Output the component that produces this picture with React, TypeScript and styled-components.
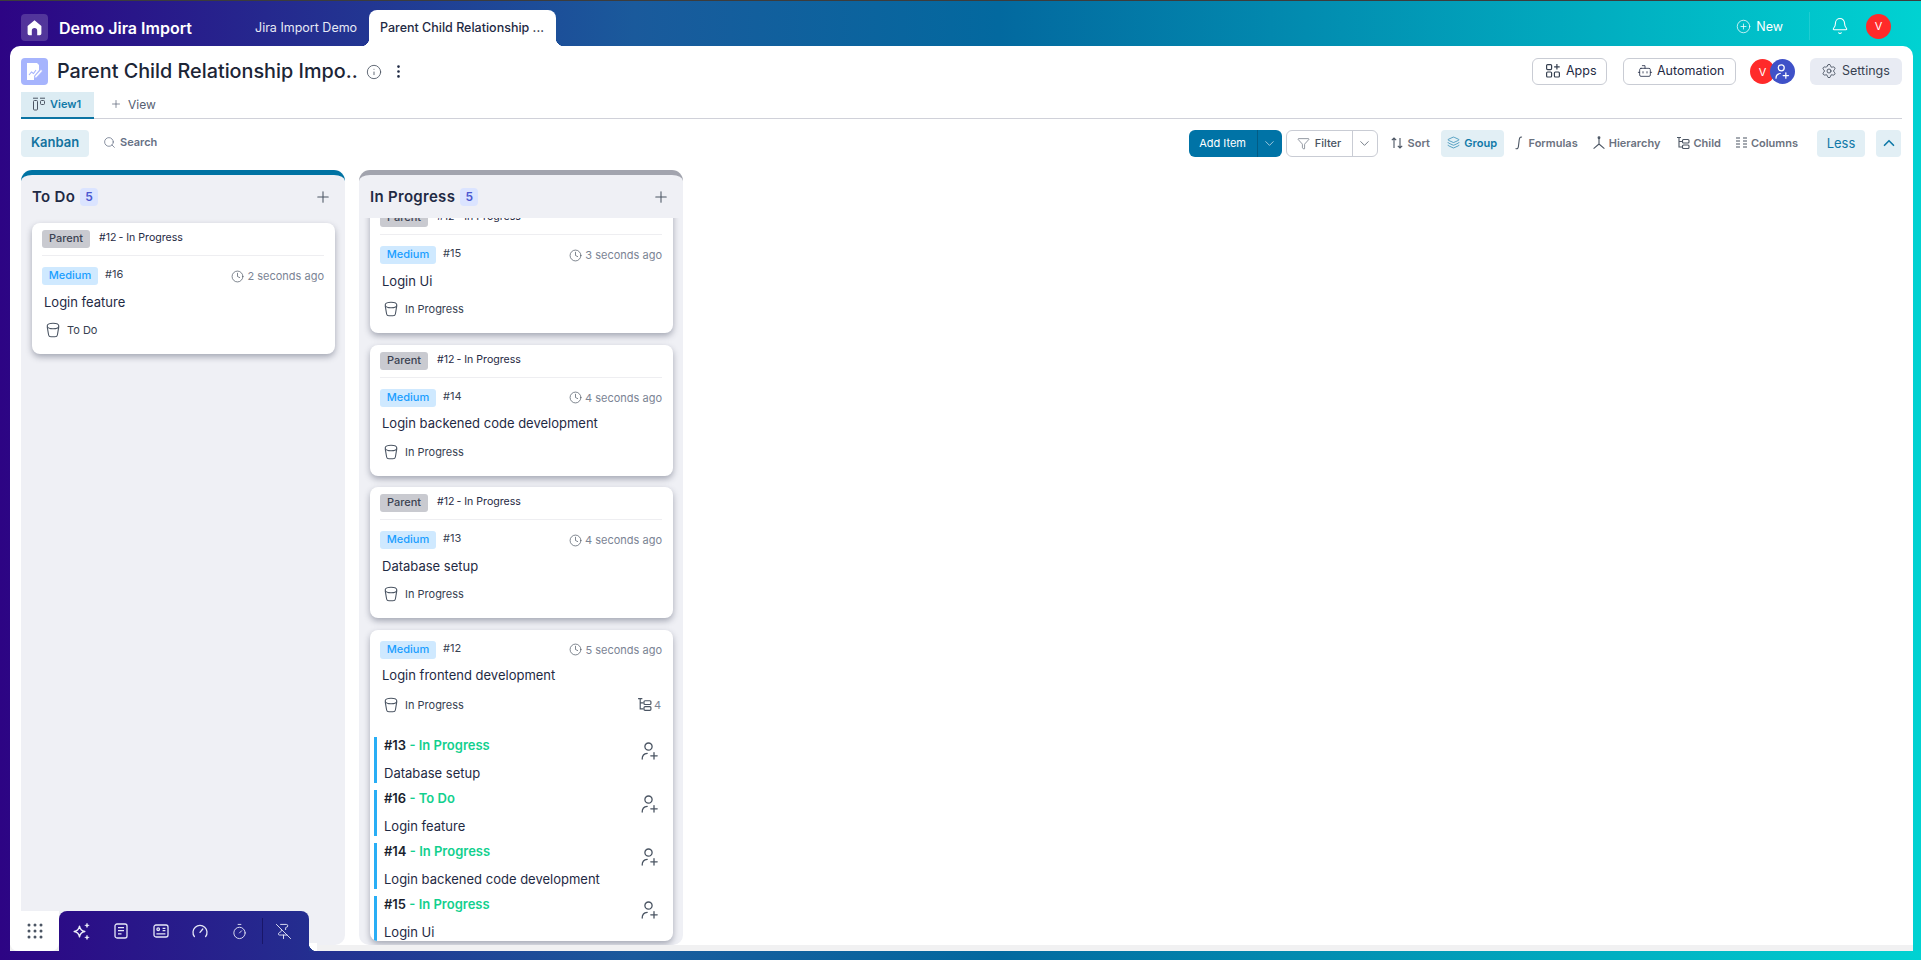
import { FC, ReactNode } from 'react'
import styled, { createGlobalStyle } from 'styled-components'
import {
  Bell,
  Bot,
  ChevronDown,
  ChevronUp,
  CirclePlus,
  Clock,
  EllipsisVertical,
  Funnel,
  Info,
  Layers,
  PinOff,
  Plus,
  Search,
  Settings,
  Timer,
} from 'lucide-react'

const GRADIENT = 'linear-gradient(90deg, #2d0484 0%, #1a5a9c 33%, #03699f 52%, #00d2d2 100%)'

const GlobalStyle = createGlobalStyle`
  html, body {
    margin: 0;
    padding: 0;
    height: 100%;
    overflow: hidden;
  }
  body {
    font-family: Inter, "Noto Sans", "Liberation Sans", sans-serif;
    color: #1f2a44;
  }
  * {
    box-sizing: border-box;
  }
`

const Shell = styled.div`
  position: relative;
  display: flex;
  flex-direction: column;
  width: 1921px;
  height: 960px;
  overflow: hidden;
  background: ${GRADIENT};
  background-attachment: fixed;
  border-top: 1px solid #3c3c3c;
`

/* ---------- top bar ---------- */

const TopBar = styled.header`
  display: flex;
  align-items: flex-end;
  height: 45px;
  flex: none;
  padding: 0 30px 0 21px;
`

const HomeTile = styled.div`
  display: flex;
  align-items: center;
  justify-content: center;
  width: 27px;
  height: 27px;
  margin-bottom: 5px;
  border-radius: 4px;
  background: rgba(255, 255, 255, 0.18);
`

const AppName = styled.div`
  margin: 0 0 9px 11px;
  width: 196px;
  color: #fff;
  font-size: 16px;
  font-weight: 600;
  line-height: 18px;
`

const TabText = styled.div`
  width: 114px;
  margin-bottom: 9px;
  color: #e6e9f5;
  font-size: 12.5px;
  line-height: 18px;
`

const ActiveTab = styled.div`
  position: relative;
  width: 187px;
  height: 36px;
  padding-left: 11px;
  border-radius: 8px 8px 0 0;
  background: #fff;
  color: #1f2a44;
  font-size: 12.5px;
  font-weight: 500;
  line-height: 35px;
  white-space: nowrap;

  &::before,
  &::after {
    content: '';
    position: absolute;
    bottom: 0;
    width: 8px;
    height: 8px;
  }
  &::before {
    left: -8px;
    background: radial-gradient(circle at 0 0, transparent 8px, #fff 8.5px);
  }
  &::after {
    right: -8px;
    background: radial-gradient(circle at 100% 0, transparent 8px, #fff 8.5px);
  }
`

const TopRight = styled.div`
  display: flex;
  align-items: center;
  height: 40px;
  margin-left: auto;
  color: #fff;
`

const NewLink = styled.div`
  display: flex;
  align-items: center;
  gap: 5px;
  padding-right: 26px;
  font-size: 12.5px;
  font-weight: 400;
`

const BarSeparator = styled.div`
  width: 1px;
  height: 28px;
  margin-right: 21px;
  background: rgba(255, 255, 255, 0.12);
`

const BellSlot = styled.div`
  display: flex;
  margin-right: 17px;
`

const Avatar = styled.div`
  display: flex;
  align-items: center;
  justify-content: center;
  width: 25px;
  height: 25px;
  border-radius: 50%;
  background: #ff2a2a;
  color: #fff;
  font-size: 11px;
`

/* ---------- main sheet ---------- */

const Sheet = styled.main`
  display: flex;
  flex-direction: column;
  flex: 1;
  min-height: 0;
  margin: 0 8px 9px 10px;
  padding: 12px 11px 0;
  border-radius: 10px 10px 0 0;
  background: #fff;
`

const TitleRow = styled.div`
  display: flex;
  align-items: center;
  height: 27px;
  flex: none;
`

const SheetIcon = styled.div`
  display: flex;
  align-items: center;
  justify-content: center;
  width: 27px;
  height: 27px;
  border-radius: 4px;
  background: #a6b4fd;
`

const SheetTitle = styled.h1`
  margin: 0 0 0 9px;
  color: #1c2536;
  font-size: 19.8px;
  font-weight: 500;
  line-height: 27px;
  white-space: nowrap;
`

const TitleIcons = styled.div`
  display: flex;
  align-items: center;
  gap: 8px;
  margin-left: 8px;
  color: #4b5563;
`

const RowRight = styled.div`
  display: flex;
  align-items: center;
  margin-left: auto;
`

const OutlineButton = styled.button<{ $w: number; $gap: number }>`
  display: flex;
  align-items: center;
  gap: ${(p) => p.$gap}px;
  width: ${(p) => p.$w}px;
  height: 27px;
  margin-right: 16px;
  padding: 0 0 2px 13px;
  border: 1px solid #c9ccd4;
  border-radius: 6px;
  background: #fff;
  color: #1f2a44;
  font: 400 12.5px Inter, sans-serif;
`

const AvatarPair = styled.div`
  display: flex;
  margin: 0 15px 0 -2px;
`

const InviteAvatar = styled(Avatar)`
  margin-left: -5px;
  background: #3f51c8;
`

const SettingsButton = styled.button`
  display: flex;
  align-items: center;
  gap: 5px;
  width: 92px;
  height: 27px;
  padding: 0 0 2px 11px;
  border: 0;
  border-radius: 6px;
  background: #e8ebf3;
  color: #374151;
  font: 400 12.5px Inter, sans-serif;
`

const ViewTabs = styled.div`
  display: flex;
  align-items: stretch;
  height: 27px;
  flex: none;
  margin-top: 7px;
  border-bottom: 1px solid #d0d1d9;
`

const ViewTab = styled.div`
  display: flex;
  align-items: center;
  gap: 4px;
  width: 73px;
  padding: 0 0 2px 11px;
  border-bottom: 2px solid #0b74a3;
  margin-bottom: -1px;
  background: #dcecf3;
  color: #0f79a8;
  font-size: 11px;
  font-weight: 600;
`

const AddView = styled.div`
  display: flex;
  align-items: center;
  gap: 6px;
  margin-left: 16px;
  padding-bottom: 2px;
  color: #566072;
  font-size: 12px;
`

const ToolRow = styled.div`
  display: flex;
  align-items: center;
  height: 27px;
  flex: none;
  margin-top: 11px;
`

const KanbanChip = styled.div`
  width: 68px;
  height: 27px;
  border-radius: 4px;
  background: #e2eff5;
  color: #13739f;
  font-size: 13px;
  font-weight: 600;
  line-height: 25px;
  text-align: center;
`

const SearchLink = styled.div`
  display: flex;
  align-items: center;
  gap: 4px;
  margin-left: 14px;
  padding-bottom: 3px;
  color: #667085;
  font-size: 11px;
  font-weight: 600;
`

const SplitPrimary = styled.div`
  display: flex;
  align-items: center;
  width: 93px;
  height: 27px;
  border-radius: 6px;
  background: #0073a6;
  color: #fff;
  font-size: 11px;
  font-weight: 400;
`

const SplitLabel = styled.div`
  width: 68px;
  padding-bottom: 2px;
  text-align: center;
`

const SplitCaret = styled.div<{ $line: string; $color: string }>`
  display: flex;
  align-items: center;
  justify-content: center;
  flex: 1;
  height: 100%;
  border-left: 1px solid ${(p) => p.$line};
  color: ${(p) => p.$color};
`

const SplitOutline = styled.div`
  display: flex;
  align-items: center;
  width: 92px;
  height: 27px;
  margin: 0 6px 0 4px;
  border: 1px solid #c9ccd4;
  border-radius: 6px;
  color: #4b5563;
  font-size: 11px;
  font-weight: 500;
`

const FilterLabel = styled.div`
  display: flex;
  align-items: center;
  justify-content: center;
  gap: 5px;
  width: 65px;
  padding-bottom: 1px;
`

const ToolLink = styled.div<{ $on?: boolean; $gap?: number; $ml?: number; $mr?: number }>`
  display: flex;
  align-items: center;
  gap: ${(p) => p.$gap ?? 4}px;
  height: 27px;
  margin: 0 ${(p) => p.$mr ?? 14}px 0 ${(p) => p.$ml ?? 0}px;
  padding: 0 ${(p) => (p.$on ? 6.5 : 0)}px 2px;
  border-radius: 4px;
  background: ${(p) => (p.$on ? '#e2eff5' : 'transparent')};
  color: ${(p) => (p.$on ? '#0f79a8' : '#6b7280')};
  font-size: 11px;
  font-weight: 600;
  white-space: nowrap;
`

const SoftChip = styled.div<{ $w: number; $ml?: number; $mr?: number }>`
  display: flex;
  align-items: center;
  justify-content: center;
  width: ${(p) => p.$w}px;
  height: 27px;
  margin: 0 ${(p) => p.$mr ?? 0}px 0 ${(p) => p.$ml ?? 0}px;
  padding-bottom: 2px;
  border-radius: 4px;
  background: #e2eff5;
  color: #0f79a8;
  font-size: 13px;
`

/* ---------- board ---------- */

const Board = styled.div`
  display: flex;
  flex: 1;
  min-height: 0;
  gap: 14px;
  margin-top: 13px;
`

const Column = styled.section<{ $cap: string }>`
  display: flex;
  flex-direction: column;
  width: 324px;
  height: 775px;
  overflow: hidden;
  border-top: 5px solid ${(p) => p.$cap};
  border-radius: 11px 11px 10px 10px;
  background: #eff0f5;
`

const ColumnHead = styled.div`
  display: flex;
  align-items: center;
  height: 43px;
  flex: none;
  padding: 0 13px 0 11px;
`

const ColumnName = styled.div`
  color: #1f2a44;
  font-size: 15px;
  font-weight: 600;
  letter-spacing: 0.3px;
`

const CountBadge = styled.div`
  width: 18px;
  height: 18px;
  margin-left: 5px;
  border-radius: 4px;
  background: #dbe4ff;
  color: #4a56d0;
  font-size: 12px;
  font-weight: 600;
  line-height: 18px;
  text-align: center;
`

const AddCard = styled.div`
  display: flex;
  margin-left: auto;
  color: #4b5563;
`

const ColumnBody = styled.div`
  flex: 1;
  min-height: 0;
  overflow: hidden;
  padding: 5px 10px 0 11px;
`

const CardList = styled.div<{ $shift?: number }>`
  display: flex;
  flex-direction: column;
  gap: 11.5px;
  margin-top: ${(p) => p.$shift ?? 0}px;
`

const Card = styled.article<{ $h?: number }>`
  flex: none;
  height: ${(p) => (p.$h ? `${p.$h}px` : 'auto')};
  overflow: hidden;
  padding: ${(p) => (p.$h ? '11px' : '7px')} 11px 16px 10px;
  border-radius: 8px;
  background: #fff;
  box-shadow: 0 3px 6px rgba(30, 35, 60, 0.35);
`

const ParentRow = styled.div`
  display: flex;
  align-items: flex-start;
  gap: 9px;
  height: 26px;
  margin-bottom: 11px;
  padding-bottom: 8px;
  border-bottom: 1px solid #eeeef1;
  color: #1f2a44;
  font-size: 10.6px;
  line-height: 16px;
`

const Tag = styled.span<{ $bg: string; $fg: string; $w: number }>`
  display: inline-block;
  width: ${(p) => p.$w}px;
  height: 18px;
  flex: none;
  border-radius: 3px;
  background: ${(p) => p.$bg};
  color: ${(p) => p.$fg};
  font-size: 11px;
  font-weight: 500;
  line-height: 16px;
  text-align: center;
`

const MetaRow = styled.div`
  display: flex;
  align-items: flex-start;
  gap: 7px;
  height: 18px;
  color: #374151;
  font-size: 11px;
  line-height: 14px;
`

const TimeAgo = styled.div`
  display: flex;
  align-items: center;
  gap: 3px;
  height: 18px;
  margin-left: auto;
  color: #7b8494;
  font-size: 11px;
  font-weight: 400;
`

const CardTitle = styled.div`
  margin: 8.5px 0 0 2px;
  color: #1f2a44;
  font-size: 13px;
  line-height: 16px;
`

const StatusRow = styled.div<{ $loose?: boolean }>`
  display: flex;
  align-items: center;
  gap: 7px;
  height: 16px;
  margin: ${(p) => (p.$loose ? 13.5 : 12.5)}px 0 0 4px;
  color: #374151;
  font-size: 11px;
`

const ChildCount = styled.div`
  display: flex;
  align-items: center;
  gap: 2px;
  margin-left: auto;
  margin-right: 1px;
  color: #7b8494;
`

const SubList = styled.div`
  display: flex;
  flex-direction: column;
  gap: 7px;
  margin: 24px -6px 0 -6px;
`

const SubItem = styled.div`
  display: grid;
  grid-template-columns: 1fr auto;
  flex: none;
  height: 46px;
  padding-left: 7px;
  border-left: 3px solid #29aef5;
`

const SubHead = styled.div`
  color: #12d08e;
  font-size: 13px;
  font-weight: 600;
  line-height: 16px;
`

const SubId = styled.span`
  color: #1a1f2e;
`

const SubText = styled.div`
  grid-column: 1;
  margin-top: 11px;
  color: #1f2a44;
  font-size: 13px;
  line-height: 16px;
`

const SubUser = styled.div`
  grid-column: 2;
  grid-row: 1 / 3;
  padding: 5px 9px 0 0;
  color: #4b5563;
`

/* ---------- bottom dock ---------- */

const FootStrip = styled.div`
  height: 6px;
  flex: none;
  margin: 0 -11px;
  background: #f1f1f2;
`

const DockWrap = styled.div`
  position: absolute;
  left: 10px;
  bottom: 9px;
  display: flex;
  height: 40px;
`

const AppsTile = styled.div`
  display: flex;
  align-items: center;
  justify-content: center;
  width: 49px;
  border-radius: 0 0 8px 8px;
  background: #fff;
`

const Dock = styled.div`
  position: relative;
  display: flex;
  align-items: center;
  width: 250px;
  padding-left: 3px;
  border-radius: 8px 8px 0 0;
  background: ${GRADIENT};
  background-attachment: fixed;
  color: #e6e8f7;

  &::after {
    content: '';
    position: absolute;
    right: -8px;
    bottom: 0;
    width: 8px;
    height: 8px;
    background: radial-gradient(circle at 100% 0, #fff 8px, #223a90 8.5px);
  }
`

const DockSlot = styled.div`
  display: flex;
  align-items: center;
  justify-content: center;
  width: 39.5px;
  height: 100%;
`

const DockDivider = styled.div`
  width: 1px;
  height: 26px;
  margin: 0 1px 0 2px;
  background: rgba(20, 15, 90, 0.7);
`

/* ---------- drawn icons ---------- */

const HomeGlyph = () => (
  <svg width="17" height="17" viewBox="0 0 17 17" fill="#fff">
    <path d="M8.5 1.2 15.4 7v7.6a1.6 1.6 0 0 1-1.6 1.6h-2.6v-4.4a2.7 2.7 0 0 0-5.4 0v4.4H3.2a1.6 1.6 0 0 1-1.6-1.6V7z" />
  </svg>
)

const SheetGlyph = () => (
  <svg width="17" height="19" viewBox="0 0 17 19" fill="none">
    <path d="M1 1h10l2 2v5l-5 6v4H1z" fill="#fff" />
    <path d="M3 13l2.5-3 2 1.5L10 8" stroke="#a6b4fd" strokeWidth="1.1" />
    <path d="M9 14l6-6.5 1.5 1.4-6 6.5-2 .6z" fill="#fff" stroke="#a6b4fd" strokeWidth=".6" />
  </svg>
)

const AppsGlyph = () => (
  <svg width="14" height="15" viewBox="0 0 14 15" fill="none" stroke="#374151" strokeWidth="1.2">
    <rect x=".6" y="1.6" width="5" height="5" rx="1" />
    <rect x=".6" y="9" width="5" height="5" rx="1" />
    <rect x="8.4" y="9" width="5" height="5" rx="1" />
    <path d="M10.9 1v5.5M8.1 3.8h5.6" />
  </svg>
)

const BoardGlyph = () => (
  <svg width="14" height="14" viewBox="0 0 14 14" fill="none" stroke="#4b5563" strokeWidth="1">
    <path d="M1 1.2h5M8 1.2h5" />
    <rect x="1.5" y="3.5" width="4" height="9.5" rx="1" />
    <rect x="8.5" y="3.5" width="4" height="4" rx="1" />
  </svg>
)

const SortGlyph = () => (
  <svg width="14" height="14" viewBox="0 0 14 14" fill="none" stroke="#4b5563" strokeWidth="1.1">
    <path d="M4 12V2M1.8 4.2 4 2l2.2 2.2M10 2v10M7.8 9.8 10 12l2.2-2.2" />
  </svg>
)

const IntegralGlyph = () => (
  <svg width="10" height="14" viewBox="0 0 10 14" fill="none" stroke="#4b5563" strokeWidth="1.1">
    <path d="M8 1.2C6 .6 5.5 2 5.2 4L4.4 10.5C4.2 12.4 3.2 13.2 1.6 12.6" />
  </svg>
)

const HierarchyGlyph = () => (
  <svg width="14" height="14" viewBox="0 0 14 14" fill="none" stroke="#4b5563" strokeWidth="1.1">
    <circle cx="7" cy="1.8" r=".9" fill="#4b5563" />
    <path d="M7 2.5V8M7 8 1.6 12.6M7 8l5.4 4.6" />
  </svg>
)

const ChildGlyph = ({ size = 14, color = '#4b5563' }: { size?: number; color?: string }) => (
  <svg width={size} height={size} viewBox="0 0 14 14" fill="none" stroke={color} strokeWidth="1.1">
    <path d="M1 1.5h4M3 1.5V11h3M3 5.5h3" />
    <rect x="6.5" y="3.5" width="6.5" height="3.5" rx="1" />
    <rect x="6.5" y="9" width="6.5" height="3.5" rx="1" />
  </svg>
)

const ColumnsGlyph = () => (
  <svg width="13" height="13" viewBox="0 0 13 13" fill="none" stroke="#4b5563" strokeWidth="1.1">
    <path d="M1 2h4M8 2h4M1 5h4M8 5h4M1 8h4M8 8h4M1 11h4M8 11h4" />
  </svg>
)

const BucketGlyph = () => (
  <svg width="14" height="16" viewBox="0 0 14 16" fill="none" stroke="#4b5563" strokeWidth="1.1">
    <ellipse cx="7" cy="4" rx="5.8" ry="2.8" />
    <path d="M1.2 4.6 2.6 13c.2 1.2 1.4 1.8 2.4 1.8h4c1 0 2.2-.6 2.4-1.8l1.4-8.4" />
  </svg>
)

const UserAddGlyph = ({ size = 18, weight = 1.3 }: { size?: number; weight?: number }) => (
  <svg width={size} height={size} viewBox="0 0 18 18" fill="none" stroke="currentColor" strokeWidth={weight} strokeLinecap="round">
    <circle cx="7.5" cy="4.6" r="3.6" />
    <path d="M1.2 17c0-3.2 2-5.4 5-5.6" />
    <path d="M13 10.6v6.4M9.8 13.8h6.4" />
  </svg>
)

const SparkGlyph = () => (
  <svg width="19" height="19" viewBox="0 0 19 19" fill="none" stroke="#eef0fb" strokeWidth="1.4" strokeLinejoin="round">
    <path d="M7.5 4.2C8 7.4 9.4 8.9 12.8 9.5 9.4 10.1 8 11.6 7.5 14.8 7 11.6 5.6 10.1 2.2 9.5 5.6 8.9 7 7.4 7.5 4.2Z" />
    <path fill="#eef0fb" strokeWidth=".6" d="M15 1.2c.2 1.4.8 2 2.2 2.2-1.4.2-2 .8-2.2 2.2-.2-1.4-.8-2-2.2-2.2 1.4-.2 2-.8 2.2-2.2ZM15 13.2c.2 1.4.8 2 2.2 2.2-1.4.2-2 .8-2.2 2.2-.2-1.4-.8-2-2.2-2.2 1.4-.2 2-.8 2.2-2.2Z" />
  </svg>
)

const DotsGlyph = () => (
  <svg width="16" height="16" viewBox="0 0 16 16" fill="#4b5563">
    {[2, 8, 14].flatMap((y) =>
      [2, 8, 14].map((x) => <circle key={`${x}-${y}`} cx={x} cy={y} r="1.5" />),
    )}
  </svg>
)

const DocGlyph = () => (
  <svg width="14" height="16" viewBox="0 0 14 16" fill="none" stroke="currentColor" strokeWidth="1.3">
    <rect x="1" y="1" width="12" height="14" rx="2" />
    <path d="M4 4.6h6M4 7.6h6M4 10.8h3.5" />
  </svg>
)

const ProfileGlyph = () => (
  <svg width="16" height="14" viewBox="0 0 16 14" fill="none" stroke="currentColor" strokeWidth="1.3">
    <rect x="1" y="1" width="14" height="12" rx="2" />
    <circle cx="5.2" cy="5.2" r="1.3" />
    <path d="M9.6 4.4h2.8M9.6 6.6h2.8M3.4 9.8h9" />
  </svg>
)

const GaugeGlyph = () => (
  <svg width="16" height="14" viewBox="0 0 16 14" fill="none" stroke="currentColor" strokeWidth="1.3" strokeLinecap="round">
    <path d="M2.4 12.6A7 7 0 1 1 13.6 12.6" />
    <path d="M8 8.4 10.8 5" />
  </svg>
)

/* ---------- data ---------- */

type CardData = { id: string; title: string; time: string; status: string }

const progress: CardData[] = [
  { id: '#15', title: 'Login Ui', time: '3 seconds ago', status: 'In Progress' },
  { id: '#14', title: 'Login backened code development', time: '4 seconds ago', status: 'In Progress' },
  { id: '#13', title: 'Database setup', time: '4 seconds ago', status: 'In Progress' },
]

const children = [
  { id: '#13', status: 'In Progress', title: 'Database setup' },
  { id: '#16', status: 'To Do', title: 'Login feature' },
  { id: '#14', status: 'In Progress', title: 'Login backened code development' },
  { id: '#15', status: 'In Progress', title: 'Login Ui' },
]

const CardMeta: FC<{ id: string; time: string }> = ({ id, time }) => (
  <MetaRow>
    <Tag $bg="#cfe9ff" $fg="#1a9eff" $w={56}>Medium</Tag>
    {id}
    <TimeAgo>
      <Clock size={13} strokeWidth={1.3} color="#4b5563" />
      {time}
    </TimeAgo>
  </MetaRow>
)

const CardStatus: FC<{ status: string; loose?: boolean; children?: ReactNode }> = ({ status, loose, children: extra }) => (
  <StatusRow $loose={loose}>
    <BucketGlyph />
    {status}
    {extra}
  </StatusRow>
)

const TaskCard: FC<{ card: CardData }> = ({ card }) => (
  <Card>
    <ParentRow>
      <Tag $bg="#c9cad0" $fg="#3b4252" $w={48}>Parent</Tag>
      {'#12\u2009- In Progress'}
    </ParentRow>
    <CardMeta id={card.id} time={card.time} />
    <CardTitle>{card.title}</CardTitle>
    <CardStatus status={card.status} />
  </Card>
)

const App: FC = () => (
  <>
    <GlobalStyle />
    <Shell>
      <TopBar>
        <HomeTile>
          <HomeGlyph />
        </HomeTile>
        <AppName>Demo Jira Import</AppName>
        <TabText>Jira Import Demo</TabText>
        <ActiveTab>Parent Child Relationship ...</ActiveTab>
        <TopRight>
          <NewLink>
            <CirclePlus size={15} strokeWidth={1.2} />
            New
          </NewLink>
          <BarSeparator />
          <BellSlot>
            <Bell size={18} strokeWidth={1.4} />
          </BellSlot>
          <Avatar>V</Avatar>
        </TopRight>
      </TopBar>

      <Sheet>
        <TitleRow>
          <SheetIcon>
            <SheetGlyph />
          </SheetIcon>
          <SheetTitle>Parent Child Relationship Impo..</SheetTitle>
          <TitleIcons>
            <Info size={16} strokeWidth={1.3} />
            <EllipsisVertical size={17} strokeWidth={1.8} color="#1f2a44" />
          </TitleIcons>
          <RowRight>
            <OutlineButton $w={75} $gap={6}>
              <AppsGlyph />
              Apps
            </OutlineButton>
            <OutlineButton $w={113} $gap={4}>
              <Bot size={16} strokeWidth={1.2} />
              Automation
            </OutlineButton>
            <AvatarPair>
              <Avatar>V</Avatar>
              <InviteAvatar>
                <UserAddGlyph size={15} weight={1.5} />
              </InviteAvatar>
            </AvatarPair>
            <SettingsButton>
              <Settings size={16} strokeWidth={1.2} />
              Settings
            </SettingsButton>
          </RowRight>
        </TitleRow>

        <ViewTabs>
          <ViewTab>
            <BoardGlyph />
            View1
          </ViewTab>
          <AddView>
            <Plus size={12} strokeWidth={1.4} />
            View
          </AddView>
        </ViewTabs>

        <ToolRow>
          <KanbanChip>Kanban</KanbanChip>
          <SearchLink>
            <Search size={13} strokeWidth={1.4} />
            Search
          </SearchLink>
          <RowRight>
            <SplitPrimary>
              <SplitLabel>Add Item</SplitLabel>
              <SplitCaret $line="#035c85" $color="#cfe3ee">
                <ChevronDown size={15} strokeWidth={1.2} />
              </SplitCaret>
            </SplitPrimary>
            <SplitOutline>
              <FilterLabel>
                <Funnel size={13} strokeWidth={1.1} />
                Filter
              </FilterLabel>
              <SplitCaret $line="#c9ccd4" $color="#4b5563">
                <ChevronDown size={15} strokeWidth={1.2} />
              </SplitCaret>
            </SplitOutline>
            <ToolLink $ml={6} $mr={5}>
              <SortGlyph />
              Sort
            </ToolLink>
            <ToolLink $on $ml={6} $mr={9}>
              <Layers size={13} strokeWidth={1.2} />
              Group
            </ToolLink>
            <ToolLink $gap={5} $ml={1} $mr={14}>
              <IntegralGlyph />
              Formulas
            </ToolLink>
            <ToolLink $gap={3} $mr={16}>
              <HierarchyGlyph />
              Hierarchy
            </ToolLink>
            <ToolLink $gap={3} $mr={14}>
              <ChildGlyph />
              Child
            </ToolLink>
            <ToolLink $gap={3} $mr={19}>
              <ColumnsGlyph />
              Columns
            </ToolLink>
            <SoftChip $w={48}>Less</SoftChip>
            <SoftChip $w={25} $ml={11} $mr={1}>
              <ChevronUp size={18} strokeWidth={2.2} />
            </SoftChip>
          </RowRight>
        </ToolRow>

        <Board>
          <Column $cap="#0073a3">
            <ColumnHead>
              <ColumnName>To Do</ColumnName>
              <CountBadge>5</CountBadge>
              <AddCard>
                <Plus size={18} strokeWidth={1.4} />
              </AddCard>
            </ColumnHead>
            <ColumnBody>
              <TaskCard card={{ id: '#16', title: 'Login feature', time: '2 seconds ago', status: 'To Do' }} />
            </ColumnBody>
          </Column>

          <Column $cap="#a2a4ae">
            <ColumnHead>
              <ColumnName>In Progress</ColumnName>
              <CountBadge>5</CountBadge>
              <AddCard>
                <Plus size={18} strokeWidth={1.4} />
              </AddCard>
            </ColumnHead>
            <ColumnBody>
              <CardList $shift={-21}>
                {progress.map((card) => (
                  <TaskCard key={card.id} card={card} />
                ))}
                <Card $h={311}>
                  <CardMeta id="#12" time="5 seconds ago" />
                  <CardTitle>Login frontend development</CardTitle>
                  <CardStatus status="In Progress" loose>
                    <ChildCount>
                      <ChildGlyph size={15} />4
                    </ChildCount>
                  </CardStatus>
                  <SubList>
                    {children.map((child) => (
                      <SubItem key={child.id}>
                        <SubHead>
                          <SubId>{child.id}</SubId> - {child.status}
                        </SubHead>
                        <SubUser>
                          <UserAddGlyph />
                        </SubUser>
                        <SubText>{child.title}</SubText>
                      </SubItem>
                    ))}
                  </SubList>
                </Card>
              </CardList>
            </ColumnBody>
          </Column>
        </Board>
        <FootStrip />
      </Sheet>

      <DockWrap>
        <AppsTile>
          <DotsGlyph />
        </AppsTile>
        <Dock>
          <DockSlot>
            <SparkGlyph />
          </DockSlot>
          <DockSlot>
            <DocGlyph />
          </DockSlot>
          <DockSlot>
            <ProfileGlyph />
          </DockSlot>
          <DockSlot>
            <GaugeGlyph />
          </DockSlot>
          <DockSlot>
            <Timer size={17} strokeWidth={1.3} />
          </DockSlot>
          <DockDivider />
          <DockSlot>
            <PinOff size={17} strokeWidth={1.3} />
          </DockSlot>
        </Dock>
      </DockWrap>
    </Shell>
  </>
)

export default App
